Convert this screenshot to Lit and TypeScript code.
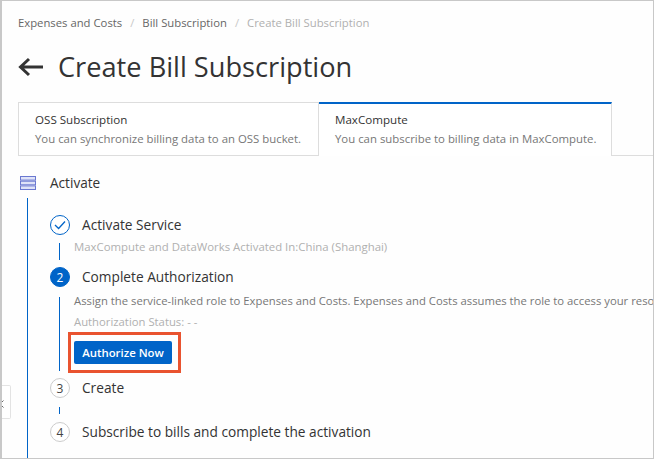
import { LitElement, html, css } from "lit";
import { customElement } from "lit/decorators.js";

@customElement("app-root")
export class AppRoot extends LitElement {
  static styles = css`
    :host { display: block; width: 654px; height: 459px; }
    * { box-sizing: border-box; }
    .page { position: relative; width: 654px; height: 459px; overflow: hidden; background: #fefefe; border: 1px solid #c8c8c8; border-left-width: 2px;
      padding: 13px 0 0 16px; font-family: "Open Sans", "Noto Sans", sans-serif; color: #333; }
    .crumbs { display: flex; align-items: center; height: 16px; font-size: 11.3px; color: #666; white-space: nowrap; }
    .sep { color: #c8c8c8; margin: 0 8px; }
    .cur { color: #b0b0b0; }
    .head { display: flex; align-items: center; height: 40px; margin-top: 17px; }
    .head svg { display: block; }
    h1 { margin: 0 0 0 15px; font-size: 27.2px; line-height: 40px; font-weight: 500; color: #333; white-space: nowrap; }
    .tabs { display: flex; margin-top: 15px; margin-right: -1px; height: 54px; }
    .tab { width: 301px; height: 54px; padding: 7px 0 0 16px; border: 1px solid #ddd; font-size: 11.4px; line-height: 19px; white-space: nowrap; background: #fff; }
    .tab b { display: block; font-weight: 500; font-size: 11.6px; color: #333; }
    .tab span { color: #777; }
    .tab.on { width: 293px; height: 54px; border: 0; border-top: 2px solid #0064c8; border-right: 1px solid #ddd; padding: 6px 0 0 16px; }
    .fill { flex: 1; border-bottom: 1px solid #ddd; height: 54px; }
    .act { display: flex; align-items: center; height: 20px; margin: 17px 0 0 2px; font-size: 13.6px; font-weight: 500; }
    .act svg { margin-right: 14px; display: block; }
    .act span, .label { padding-bottom: 2px; }
    .rail { margin: 5px 0 0 9px; border-left: 1px solid #0064c8; height: 270px; padding: 17px 0 0 22px; }
    .step { display: flex; align-items: center; height: 20px; gap: 12px; font-size: 13.7px; font-weight: 500; color: #333; white-space: nowrap; }
    .num { flex: none; width: 20px; height: 20px; border-radius: 50%; display: flex; align-items: center; justify-content: center; font-size: 12px; font-weight: 400; border: 1px solid #ccc; background: #fff; color: #444; }
    .num.cur-step { background: #0064c8; border-color: #0064c8; color: #fff; }
    .num.done { border-color: #0064c8; }
    .body { display: flow-root; margin: 8px 0 7px 9px; border-left: 1px solid #0064c8; padding-left: 14px; font-size: 11.3px; line-height: 17px; white-space: nowrap; }
    .body p { margin: 0; }
    .body1 { height: 17px; color: #b0b0b0; }
    .body1 p { margin-top: -5px; font-size: 11.4px; }
    .body2 { height: 74px; color: #777; margin-top: 10px; }
    .body2 p { height: 21px; }
    .body2 .first { margin-top: -5.5px; }
    .body2 .muted { color: #b0b0b0; }
    .mark { display: block; margin: -1.5px 0 0 -6px; border: 3px solid #e9532f; padding: 6px 3px; height: 41px; width: 113px; }
    button { display: block; width: 98px; height: 23px; margin: 0; padding: 0; border: 0; border-radius: 2px; background: #0064c8; color: #fff; font: 600 11.4px "Open Sans", sans-serif; }
    .dash { margin: 9px 0 8px 9px; width: 1px; height: 7px; background: #0064c8; }
    .handle { position: absolute; left: -2px; top: 384px; width: 11px; height: 34px; border: 1px solid #e3e3e3; border-left: 0; border-radius: 0 2px 2px 0; background: #fff; display: flex; align-items: center; padding-top: 3px; }
  `;

  render() {
    return html`
      <div class="page">
        <div class="crumbs">
          <span>Expenses and Costs</span><span class="sep">/</span>
          <span>Bill Subscription</span><span class="sep">/</span>
          <span class="cur">Create Bill Subscription</span>
        </div>
        <div class="head">
          <svg width="25" height="20" viewBox="0 0 25 20" fill="none" stroke="#333" stroke-width="3">
            <path d="M25 10H2.5M11 2 2.5 10 11 18" />
          </svg>
          <h1>Create Bill Subscription</h1>
        </div>
        <div class="tabs">
          <div class="tab"><b>OSS Subscription</b><span>You can synchronize billing data to an OSS bucket.</span></div>
          <div class="tab on"><b>MaxCompute</b><span>You can subscribe to billing data in MaxCompute.</span></div>
          <div class="fill"></div>
        </div>
        <div class="act">
          <svg width="16" height="14" viewBox="0 0 16 14" fill="#dfe3f8" stroke="#6a78d0" stroke-width="1">
            <rect x="0.5" y="0.5" width="15" height="3.6" />
            <rect x="0.5" y="5.2" width="15" height="3.6" />
            <rect x="0.5" y="9.9" width="15" height="3.6" />
          </svg>
          <span>Activate</span>
        </div>
        <div class="rail">
          <div class="step">
            <span class="num done">
              <svg width="12" height="10" viewBox="0 0 12 10" fill="none" stroke="#0064c8" stroke-width="1.3"><path d="M1 5l3.6 3.5L11 1.5" /></svg>
            </span>
            <span class="label">Activate Service</span>
          </div>
          <div class="body body1"><p>MaxCompute and DataWorks Activated In:China (Shanghai)</p></div>
          <div class="step"><span class="num cur-step">2</span><span class="label">Complete Authorization</span></div>
          <div class="body body2">
            <p class="first">Assign the service-linked role to Expenses and Costs. Expenses and Costs assumes the role to access your resources.</p>
            <p class="muted">Authorization Status: - -</p>
            <div class="mark"><button>Authorize Now</button></div>
          </div>
          <div class="step"><span class="num">3</span><span class="label">Create</span></div>
          <div class="dash"></div>
          <div class="step"><span class="num">4</span><span class="label">Subscribe to bills and complete the activation</span></div>
        </div>
        <div class="handle">
          <svg width="5" height="8" viewBox="0 0 5 8" fill="none" stroke="#666"><path d="M3.5 0.5 0 4 3.5 7.5" /></svg>
        </div>
      </div>
    `;
  }
}
